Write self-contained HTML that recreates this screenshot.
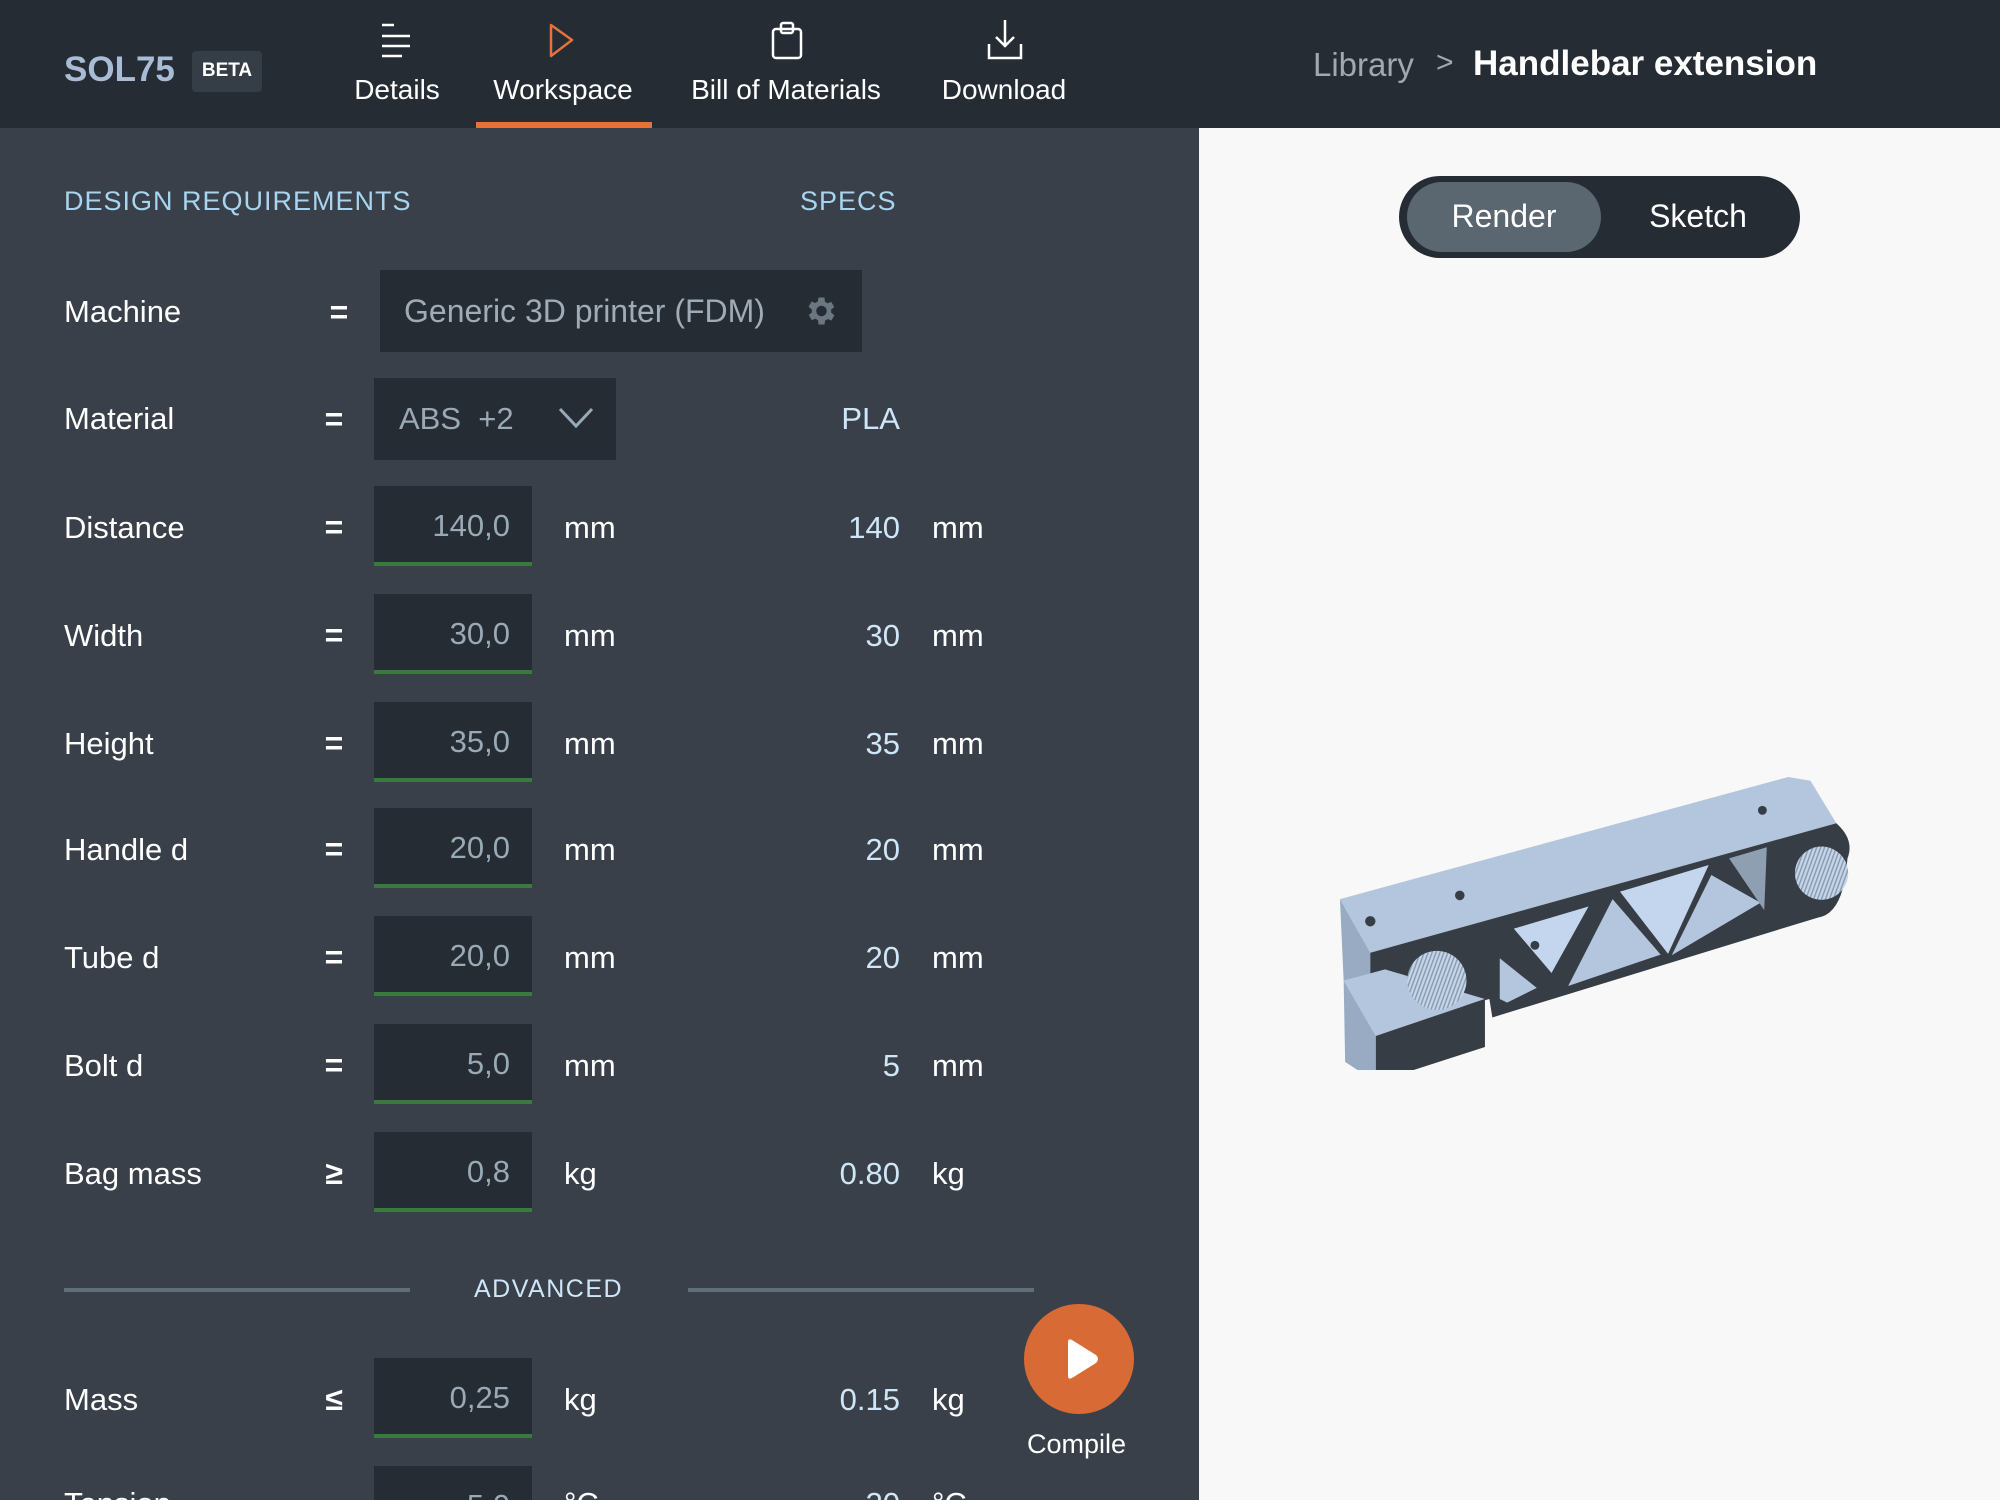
<!DOCTYPE html>
<html><head><meta charset="utf-8"><style>
*{margin:0;padding:0;box-sizing:border-box}
html,body{width:2000px;height:1500px;overflow:hidden}
body{background:#f8f8f8;font-family:"Liberation Sans",sans-serif}
#wrap{position:relative;width:2000px;height:1500px;overflow:hidden}
.hdr{position:absolute;left:0;top:0;width:2000px;height:128px;background:#252c34}
.abs{position:absolute}
.left{position:absolute;left:0;top:128px;width:1199px;height:1372px;background:#394049}
.t{position:absolute;white-space:nowrap;line-height:1}
.lbl{color:#fff;font-size:31px}
.eq{color:#fff;font-size:32px;font-weight:bold;width:40px;text-align:center}
.box{position:absolute;background:#252c34}
.inp{position:absolute;left:374px;width:158px;height:80px;background:#252c34;border-bottom:4px solid #3a7a3c}
.inp span{position:absolute;right:22px;top:22px;color:#9aa9b6;font-size:31px}
.unit{color:#fff;font-size:31px}
.spec{color:#cfe6f8;font-size:31px;text-align:right;width:120px}
.nav{color:#fff;font-size:28px;text-align:center}
</style></head><body><div id="wrap">
<div class="hdr"></div>
<div class="t" style="left:64px;top:52px;font-size:35px;font-weight:bold;color:#a9bcd6">SOL75</div>
<div class="abs" style="left:192px;top:51px;width:70px;height:41px;background:#353e46;border-radius:4px"></div>
<div class="t" style="left:192px;top:61px;width:70px;text-align:center;font-size:19px;font-weight:bold;color:#fff">BETA</div>

<svg class="abs" style="left:380px;top:22px" width="36" height="36" viewBox="0 0 36 36" fill="none" stroke="#fff" stroke-width="2.5"><path d="M2 3h12M2 14h28M2 24h28M2 34h20"/></svg>
<svg class="abs" style="left:546px;top:22px" width="36" height="36" viewBox="0 0 36 36" fill="none" stroke="#e8703a" stroke-width="2.5" stroke-linejoin="round"><path d="M5 3L26 18L5 34Z"/></svg>
<svg class="abs" style="left:770px;top:20px" width="34" height="40" viewBox="0 0 34 40" fill="none" stroke="#fff" stroke-width="2.5"><rect x="3" y="9" width="28" height="29" rx="3"/><rect x="11" y="3" width="12" height="10" rx="2"/></svg>
<svg class="abs" style="left:985px;top:18px" width="40" height="42" viewBox="0 0 40 42" fill="none" stroke="#fff" stroke-width="2.5"><path d="M20 2v26M11 19l9 9 9-9M4 26v14h32V26"/></svg>
<div class="t nav" style="left:327px;top:76px;width:140px">Details</div>
<div class="t nav" style="left:483px;top:76px;width:160px">Workspace</div>
<div class="t nav" style="left:676px;top:76px;width:220px">Bill of Materials</div>
<div class="t nav" style="left:924px;top:76px;width:160px">Download</div>
<div class="abs" style="left:476px;top:122px;width:176px;height:6px;background:#e8703a"></div>

<div class="t" style="left:1313px;top:48px;font-size:33px;color:#a0a8b0">Library</div>
<div class="t" style="left:1436px;top:48px;font-size:30px;color:#a0a8b0">&gt;</div>
<div class="t" style="left:1473px;top:46px;font-size:35px;font-weight:bold;color:#fff">Handlebar extension</div>

<div class="left"></div>
<div class="t" style="left:64px;top:188px;font-size:27px;color:#a8d4f0;letter-spacing:1px">DESIGN REQUIREMENTS</div>
<div class="t" style="left:800px;top:188px;font-size:27px;color:#a8d4f0;letter-spacing:1px">SPECS</div>

<div class="t lbl" style="left:64px;top:296px">Machine</div>
<div class="t eq" style="left:319px;top:296px">=</div>
<div class="box" style="left:380px;top:270px;width:482px;height:82px"></div>
<div class="t" style="left:404px;top:295px;font-size:32px;color:#a0abb5">Generic 3D printer (FDM)</div>
<svg class="abs" style="left:802px;top:293px" width="36" height="36" viewBox="0 0 24 24"><path fill="#6b7780" d="M19.4 13a7.5 7.5 0 000-2l2.1-1.6-2-3.5-2.5 1a7 7 0 00-1.7-1L15 3h-4l-.4 2.7a7 7 0 00-1.7 1l-2.5-1-2 3.5L6.6 11a7.5 7.5 0 000 2l-2.1 1.6 2 3.5 2.5-1a7 7 0 001.7 1L11 21h4l.4-2.7a7 7 0 001.7-1l2.5 1 2-3.5zM13 15.5a3.5 3.5 0 110-7 3.5 3.5 0 010 7z"/></svg>

<div class="t lbl" style="left:64px;top:403px">Material</div>
<div class="t eq" style="left:314px;top:403px">=</div>
<div class="box" style="left:374px;top:378px;width:242px;height:82px"></div>
<div class="t" style="left:399px;top:403px;font-size:31px;color:#9aa9b6">ABS&nbsp; +2</div>
<svg class="abs" style="left:558px;top:406px" width="36" height="24" viewBox="0 0 36 24" fill="none" stroke="#9aa9b6" stroke-width="3"><path d="M2 3l16 17L34 3"/></svg>
<div class="t spec" style="left:780px;top:403px">PLA</div>

<div class="t lbl" style="left:64px;top:512px">Distance</div><div class="t eq" style="left:314px;top:511px">=</div>
<div class="inp" style="top:486px"><span>140,0</span></div><div class="t unit" style="left:564px;top:512px">mm</div>
<div class="t spec" style="left:780px;top:512px">140</div><div class="t unit" style="left:932px;top:512px">mm</div>

<div class="t lbl" style="left:64px;top:620px">Width</div><div class="t eq" style="left:314px;top:619px">=</div>
<div class="inp" style="top:594px"><span>30,0</span></div><div class="t unit" style="left:564px;top:620px">mm</div>
<div class="t spec" style="left:780px;top:620px">30</div><div class="t unit" style="left:932px;top:620px">mm</div>

<div class="t lbl" style="left:64px;top:728px">Height</div><div class="t eq" style="left:314px;top:727px">=</div>
<div class="inp" style="top:702px"><span>35,0</span></div><div class="t unit" style="left:564px;top:728px">mm</div>
<div class="t spec" style="left:780px;top:728px">35</div><div class="t unit" style="left:932px;top:728px">mm</div>

<div class="t lbl" style="left:64px;top:834px">Handle d</div><div class="t eq" style="left:314px;top:833px">=</div>
<div class="inp" style="top:808px"><span>20,0</span></div><div class="t unit" style="left:564px;top:834px">mm</div>
<div class="t spec" style="left:780px;top:834px">20</div><div class="t unit" style="left:932px;top:834px">mm</div>

<div class="t lbl" style="left:64px;top:942px">Tube d</div><div class="t eq" style="left:314px;top:941px">=</div>
<div class="inp" style="top:916px"><span>20,0</span></div><div class="t unit" style="left:564px;top:942px">mm</div>
<div class="t spec" style="left:780px;top:942px">20</div><div class="t unit" style="left:932px;top:942px">mm</div>

<div class="t lbl" style="left:64px;top:1050px">Bolt d</div><div class="t eq" style="left:314px;top:1049px">=</div>
<div class="inp" style="top:1024px"><span>5,0</span></div><div class="t unit" style="left:564px;top:1050px">mm</div>
<div class="t spec" style="left:780px;top:1050px">5</div><div class="t unit" style="left:932px;top:1050px">mm</div>

<div class="t lbl" style="left:64px;top:1158px">Bag mass</div><div class="t eq" style="left:314px;top:1157px">≥</div>
<div class="inp" style="top:1132px"><span>0,8</span></div><div class="t unit" style="left:564px;top:1158px">kg</div>
<div class="t spec" style="left:780px;top:1158px">0.80</div><div class="t unit" style="left:932px;top:1158px">kg</div>

<div class="abs" style="left:64px;top:1288px;width:346px;height:4px;background:#5f6e78"></div>
<div class="abs" style="left:688px;top:1288px;width:346px;height:4px;background:#5f6e78"></div>
<div class="t" style="left:474px;top:1277px;font-size:25px;color:#cfe6f8;letter-spacing:1.5px">ADVANCED</div>

<div class="t lbl" style="left:64px;top:1384px">Mass</div><div class="t eq" style="left:314px;top:1383px">≤</div>
<div class="inp" style="top:1358px"><span>0,25</span></div><div class="t unit" style="left:564px;top:1384px">kg</div>
<div class="t spec" style="left:780px;top:1384px">0.15</div><div class="t unit" style="left:932px;top:1384px">kg</div>

<div class="t lbl" style="left:64px;top:1488px">Tension</div>
<div class="inp" style="top:1466px;height:60px"><span>5,0</span></div><div class="t unit" style="left:564px;top:1488px">°C</div>
<div class="t spec" style="left:780px;top:1488px">20</div><div class="t unit" style="left:932px;top:1488px">°C</div>

<div class="abs" style="left:1024px;top:1304px;width:110px;height:110px;border-radius:50%;background:#d86a35"></div>
<svg class="abs" style="left:1064px;top:1338px" width="38" height="42" viewBox="0 0 38 42"><path d="M4 4Q4 0 8 2L32 17Q36 21 32 25L8 40Q4 42 4 38Z" fill="#fff"/></svg>
<div class="t" style="left:1027px;top:1431px;font-size:27px;color:#fff">Compile</div>

<div class="abs" style="left:1399px;top:176px;width:401px;height:82px;border-radius:41px;background:#252c34"></div>
<div class="abs" style="left:1407px;top:182px;width:194px;height:70px;border-radius:35px;background:#5a6670"></div>
<div class="t" style="left:1407px;top:200px;width:194px;text-align:center;font-size:32px;color:#fff">Render</div>
<div class="t" style="left:1605px;top:200px;width:186px;text-align:center;font-size:32px;color:#fff">Sketch</div>

<svg class="abs" style="left:1300px;top:740px" width="580" height="330" viewBox="0 0 1568 892">
<defs><pattern id="kn" width="10" height="10" patternUnits="userSpaceOnUse" patternTransform="rotate(20)"><rect width="10" height="10" fill="#c6d6ea"/><rect width="4" height="10" fill="#8c9cb0"/></pattern></defs>
<polygon points="108,430 1320,100 1380,110 1450,225 190,575" fill="#b3c6dd"/>
<polygon points="108,430 190,575 190,720 118,650" fill="#98abc2"/>
<path d="M190,575 L1450,225 Q1500,270 1480,320 Q1470,470 1400,480 L520,750 L512,700 L440,720 L190,720 Z" fill="#363d45"/>
<polygon points="118,650 230,620 500,700 205,800" fill="#b3c6dd"/>
<polygon points="118,650 205,800 205,925 122,870" fill="#98abc2"/>
<polygon points="205,800 500,700 500,830 205,925" fill="#363d45"/>
<polygon points="578,510 780,450 680,630" fill="#c3d6ee"/>
<polygon points="540,590 640,670 560,710 540,700" fill="#b3c6dd"/>
<polygon points="725,665 845,430 975,580" fill="#b3c6dd"/>
<polygon points="865,410 1105,338 995,578" fill="#c3d6ee"/>
<polygon points="1005,582 1112,365 1245,440" fill="#b3c6dd"/>
<polygon points="1160,320 1262,290 1255,460" fill="#8f9fb2"/>
<circle cx="1410" cy="360" r="72" fill="url(#kn)"/>
<circle cx="370" cy="650" r="80" fill="url(#kn)"/>
<circle cx="190" cy="490" r="14" fill="#363d45"/>
<circle cx="432" cy="420" r="13" fill="#363d45"/>
<circle cx="1250" cy="190" r="12" fill="#363d45"/>
<circle cx="635" cy="555" r="12" fill="#363d45"/>
</svg>
</div></body></html>
